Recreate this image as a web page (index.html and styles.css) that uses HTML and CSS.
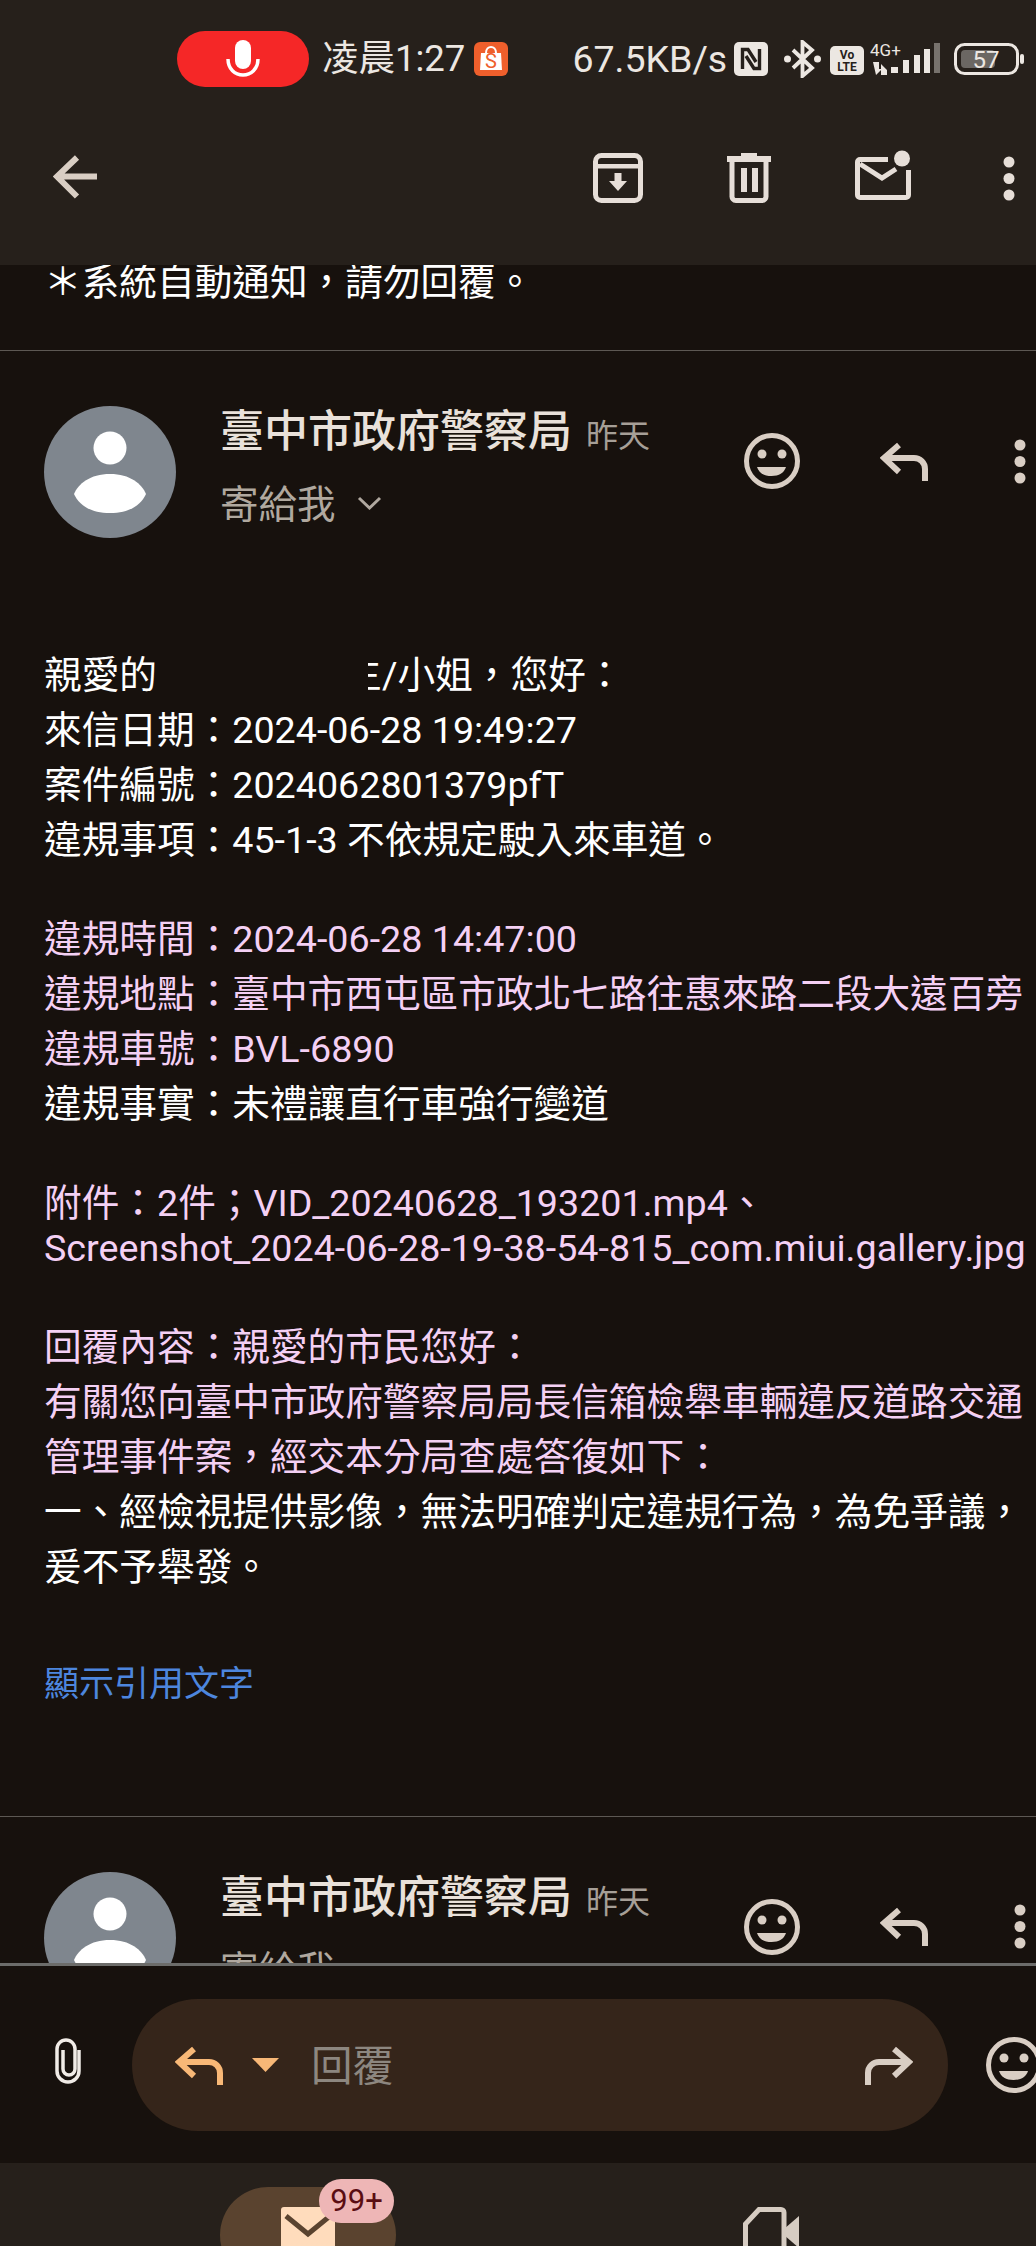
FILE: index.html
```html
<!DOCTYPE html>
<html lang="zh-Hant">
<head>
<meta charset="utf-8">
<title>Gmail</title>
<link rel="stylesheet" href="styles.css">
</head>
<body>
<svg class="defs" aria-hidden="true">
  <symbol id="reply" viewBox="0 0 49 39"><path d="M19 3 L4 16 L19 30 M4 16 H34 A11 11 0 0 1 45 27 V39" fill="none" stroke="currentColor" stroke-width="6"/></symbol>
  <symbol id="smile" viewBox="0 0 56 56"><circle cx="28" cy="28" r="25.500" fill="none" stroke="currentColor" stroke-width="5"/><circle cx="18" cy="21" r="4.500" fill="currentColor"/><circle cx="38" cy="21" r="4.500" fill="currentColor"/><path d="M13 34 H42 C40 40 35 43 27.500 43 C20 43 15 40 13 34Z" fill="currentColor"/></symbol>
  <symbol id="kebab" viewBox="0 0 22 45"><circle cx="11" cy="6" r="5.500" fill="currentColor"/><circle cx="11" cy="22.500" r="5.500" fill="currentColor"/><circle cx="11" cy="39" r="5.500" fill="currentColor"/></symbol>
  <symbol id="avatar" viewBox="0 0 132 132"><circle cx="66" cy="66" r="66" fill="#7f868e"/><circle cx="66" cy="42" r="16.500" fill="#fff"/><path d="M66 68 C86 68 98 78 102 88 C97 99 86 107 66 107 C46 107 35 99 30 88 C34 78 46 68 66 68Z" fill="#fff"/></symbol>
</svg>

<header class="topbar">
  <div class="status">
    <div class="rec">
      <svg class="rec-mic" viewBox="0 0 34 38"><rect x="9" y="0" width="16" height="29" rx="8" fill="#fff"/><path d="M2 19 C2 29 9 35 17 35 C25 35 32 29 32 19" fill="none" stroke="#fff" stroke-width="3.500"/></svg>
    </div>
    <span class="clock">凌晨1:27</span>
    <svg class="shopee" viewBox="0 0 34 34"><rect width="34" height="34" rx="6" fill="#ef5f2c"/><path d="M7 11 H27 L28 28 H6Z" fill="#fff"/><path d="M12 11 C12 3 22 3 22 11" fill="none" stroke="#fff" stroke-width="2"/><text x="17" y="26" class="shopee-s">S</text></svg>
    <span class="speed">67.5KB/s</span>
    <svg class="nfc" viewBox="0 0 34 34"><rect width="34" height="34" rx="5" fill="#ece7e2"/><path d="M8.500 27 V7.500 H14 L22 20 M25.500 7 V26.500 H20 L12 14" fill="none" stroke="#26201b" stroke-width="3.400"/></svg>
    <svg class="bt" viewBox="0 0 37 38"><path d="M9 10 L28 28 L18.500 36 V2 L28 10 L9 28" fill="none" stroke="#ece7e2" stroke-width="3.800"/><circle cx="3.500" cy="19" r="3.500" fill="#ece7e2"/><circle cx="33.500" cy="19" r="3.500" fill="#ece7e2"/></svg>
    <svg class="volte" viewBox="0 0 34 29"><rect width="34" height="29" rx="5" fill="#ece7e2"/><text x="17" y="13" class="volte-t">Vo</text><text x="17" y="25" class="volte-t">LTE</text></svg>
    <svg class="signal" viewBox="0 0 70 34"><text x="0" y="14" class="signal-t">4G+</text><path d="M3 20 H9 V27 H12 L6 33Z M11 33 V22 L17 28 V33Z" fill="#ece7e2"/><g fill="#ece7e2"><rect x="21" y="25" width="7" height="6"/><rect x="33" y="18" width="6" height="13"/><rect x="44" y="13" width="6" height="18"/><rect x="54" y="7" width="6" height="24"/></g><rect x="64" y="1" width="6" height="30" fill="#77726d"/></svg>
    <svg class="battery" viewBox="0 0 70 32"><rect x="1.500" y="1.500" width="62" height="29" rx="9" fill="none" stroke="#ece7e2" stroke-width="3"/><rect x="7" y="7" width="34" height="18" rx="4" fill="#6b6763"/><rect x="66" y="11" width="4" height="10" rx="2" fill="#ece7e2"/><text x="32" y="25" class="battery-t">57</text></svg>
  </div>
  <div class="toolbar">
    <svg class="back" viewBox="0 0 44 45"><path d="M24 3.500 L4 22.500 L24 42.500 M4 22.500 H44" fill="none" stroke="#d9cec4" stroke-width="6"/></svg>
    <div class="tools">
      <svg class="t-archive" viewBox="0 0 50 50"><rect x="2.500" y="2.500" width="45" height="45" rx="6" fill="none" stroke="#e6ded8" stroke-width="5"/><rect x="3" y="11" width="44" height="4.500" fill="#e6ded8"/><path d="M21.500 20 H28.500 V28 H34 L25 38 L16 28 H21.500Z" fill="#e6ded8"/></svg>
      <svg class="t-trash" viewBox="0 0 44 50"><path d="M14 0 H30 V3 H44 V9 H0 V3 H14Z" fill="#e6ded8"/><path d="M5 8 V43 A4 4 0 0 0 9 47.500 H35 A4 4 0 0 0 39 43 V8" fill="none" stroke="#e6ded8" stroke-width="5"/><rect x="14" y="15" width="6" height="24" fill="#e6ded8"/><rect x="25" y="15" width="6" height="24" fill="#e6ded8"/></svg>
      <svg class="t-mail" viewBox="0 0 56 50"><path d="M33 9.500 H5 A2.500 2.500 0 0 0 2.500 12 V45 A2.500 2.500 0 0 0 5 47.500 H51 A2.500 2.500 0 0 0 53.500 45 V20" fill="none" stroke="#e6ded8" stroke-width="5"/><path d="M5 14 L27 28 L41 19" fill="none" stroke="#e6ded8" stroke-width="5"/><circle cx="47" cy="8.500" r="8" fill="#e6ded8"/></svg>
      <svg class="t-kebab"><use href="#kebab"/></svg>
    </div>
  </div>
</header>

<main class="scroll">
  <p class="ln first">＊系統自動通知，請勿回覆。</p>
  <hr class="rule first-rule">

  <section class="msg">
    <div class="head">
      <svg class="avatar"><use href="#avatar"/></svg>
      <div class="who">
        <div class="who-top"><span class="name">臺中市政府警察局</span><span class="when">昨天</span></div>
        <div class="who-bot"><span class="to">寄給我</span><svg class="chev" viewBox="0 0 25 14"><path d="M2 2 L12.500 12 L23 2" fill="none" stroke="#b0a89f" stroke-width="3"/></svg></div>
      </div>
      <div class="acts">
        <svg class="a-smile"><use href="#smile"/></svg>
        <svg class="a-reply"><use href="#reply"/></svg>
        <svg class="a-kebab"><use href="#kebab"/></svg>
      </div>
    </div>

    <div class="body">
      <div class="group">
        <p class="ln">親愛的<span class="mask"></span><span class="frag"><span class="frag-in">生</span></span>/小姐，您好：</p>
        <p class="ln">來信日期：2024-06-28 19:49:27</p>
        <p class="ln">案件編號：2024062801379pfT</p>
        <p class="ln">違規事項：45-1-3 不依規定駛入來車道。</p>
      </div>
      <div class="group">
        <p class="ln pink">違規時間：2024-06-28 14:47:00</p>
        <p class="ln pink">違規地點：臺中市西屯區市政北七路往惠來路二段大遠百旁</p>
        <p class="ln pink">違規車號：BVL-6890</p>
        <p class="ln">違規事實：未禮讓直行車強行變道</p>
      </div>
      <div class="group">
        <p class="ln pink">附件：2件；VID_20240628_193201.mp4、</p>
        <p class="ln pink latin">Screenshot_2024-06-28-19-38-54-815_com.miui.gallery.jpg</p>
      </div>
      <div class="group">
        <p class="ln pink">回覆內容：親愛的市民您好：</p>
        <p class="ln pink">有關您向臺中市政府警察局局長信箱檢舉車輛違反道路交通</p>
        <p class="ln pink">管理事件案，經交本分局查處答復如下：</p>
        <p class="ln">一、經檢視提供影像，無法明確判定違規行為，為免爭議，</p>
        <p class="ln">爰不予舉發。</p>
      </div>
      <p class="ln quote">顯示引用文字</p>
    </div>
  </section>

  <hr class="rule">

  <section class="msg">
    <div class="head">
      <svg class="avatar"><use href="#avatar"/></svg>
      <div class="who">
        <div class="who-top"><span class="name">臺中市政府警察局</span><span class="when">昨天</span></div>
        <div class="who-bot"><span class="to">寄給我</span></div>
      </div>
      <div class="acts">
        <svg class="a-smile"><use href="#smile"/></svg>
        <svg class="a-reply"><use href="#reply"/></svg>
        <svg class="a-kebab"><use href="#kebab"/></svg>
      </div>
    </div>
  </section>
</main>

<footer class="composer">
  <svg class="clip" viewBox="0 0 26 46"><path d="M24 12 V33 A11 11 0 0 1 2 33 V11 A9 9 0 0 1 20 11 V31 A6 6 0 0 1 8 31 V12" fill="none" stroke="#f0ebe6" stroke-width="3.500"/></svg>
  <div class="pill">
    <svg class="p-reply"><use href="#reply"/></svg>
    <svg class="p-caret" viewBox="0 0 27 14"><path d="M0 0 H27 L13.500 14Z" fill="#f8b877"/></svg>
    <span class="p-text">回覆</span>
    <svg class="p-forward"><use href="#reply"/></svg>
  </div>
  <svg class="c-smile"><use href="#smile"/></svg>
</footer>

<nav class="nav">
  <div class="nav-active">
    <svg class="nav-mail" viewBox="0 0 54 60"><rect width="54" height="60" rx="3" fill="#ffdcbc"/><path d="M5 9 L27 27 L49 9" fill="none" stroke="#5a432f" stroke-width="5"/></svg>
    <span class="badge">99+</span>
  </div>
  <svg class="nav-video" viewBox="0 0 56 60"><path d="M16 2.500 H38 A3 3 0 0 1 41 5.500 V57 H2.500 V17Z" fill="none" stroke="#d6ccc2" stroke-width="5"/><path d="M41 22 L56 9 V41 L41 28Z" fill="#d6ccc2"/></svg>
</nav>
</body>
</html>
```
FILE: styles.css
```css
* { box-sizing: border-box; }
html, body { margin: 0; padding: 0; }
body {
  width: 1036px;
  height: 2246px;
  overflow: hidden;
  display: flex;
  flex-direction: column;
  background: #17110d;
  color: #fff;
  font-family: Roboto, "Noto Sans CJK TC", sans-serif;
}
svg { display: block; flex: none; }
.defs { width: 0; height: 0; }

/* top */
.topbar { flex: none; height: 265px; background: #26201b; padding-top: 31px; position: relative; z-index: 1; }
.status { display: flex; align-items: center; height: 56px; padding-left: 177px; color: #ece7e2; }
.rec { width: 132px; height: 56px; border-radius: 28px; background: #f52727; display: flex; align-items: center; justify-content: center; }
.rec-mic { width: 34px; height: 38px; }
.clock { margin-left: 13px; font-size: 36.5px; white-space: nowrap; line-height: 56px; }
.shopee { width: 34px; height: 34px; margin-left: 9px; }
.shopee-s { font-size: 20px; fill: #ef5f2c; text-anchor: middle; font-family: Roboto, sans-serif; }
.speed { margin-left: 64px; font-size: 37.5px; line-height: 56px; white-space: nowrap; }
.nfc { width: 34px; height: 34px; margin-left: 7px; }
.bt { width: 37px; height: 38px; margin-left: 16px; }
.volte { width: 34px; height: 29px; margin-left: 9px; margin-top: 2px; }
.volte-t { font-size: 12px; font-weight: 700; fill: #26201b; text-anchor: middle; font-family: Roboto, sans-serif; }
.signal { width: 70px; height: 34px; margin-left: 6px; }
.signal-t { font-size: 17px; fill: #ece7e2; font-family: Roboto, sans-serif; }
.battery { width: 70px; height: 32px; margin-left: 14px; }
.battery-t { font-size: 24px; fill: #ece7e2; text-anchor: middle; font-family: Roboto, sans-serif; }

.toolbar { height: 178px; display: flex; align-items: center; padding-left: 53px; padding-right: 13px; }
.back { width: 44px; height: 45px; }
.tools { margin-left: auto; margin-top: 4px; display: flex; align-items: center; gap: 84px; color: #e6ded8; }
.t-archive { width: 50px; height: 50px; }
.t-trash { width: 44px; height: 50px; }
.t-mail { width: 56px; height: 50px; margin-bottom: 6px; }
.t-kebab { width: 28px; height: 45px; padding: 0 3px; }

/* scroll */
.scroll { flex: 1; min-height: 0; overflow: hidden; }
.ln { margin: 0; font-size: 37.67px; line-height: 55px; white-space: nowrap; color: #fff; }
.first { margin: -10px 0 0 44px; }
.rule { margin: 0; border: 0; height: 1px; background: #5d5853; }
.first-rule { margin-top: 40px; }
.msg { padding-top: 55px; }
.head { display: flex; align-items: flex-start; padding: 0 5px 0 44px; }
.avatar { width: 132px; height: 132px; }
.who { margin-left: 44px; }
.who-top { display: flex; align-items: baseline; height: 52px; }
.name { font-size: 44px; font-weight: 500; line-height: 52px; color: #e9e1da; white-space: nowrap; }
.when { font-size: 32px; margin-left: 14px; color: #a69f97; }
.who-bot { display: flex; align-items: center; height: 54px; margin-top: 16px; }
.to { font-size: 38.5px; color: #b0a89f; }
.chev { width: 25px; height: 14px; margin-left: 21px; margin-top: 4px; }
.acts { margin-left: auto; margin-top: 27px; display: flex; align-items: center; gap: 80px; color: #d9cec4; }
.a-smile { width: 56px; height: 56px; }
.a-reply { width: 49px; height: 39px; }
.a-kebab { width: 22px; height: 45px; }

.body { padding: 109.500px 0 0 44px; }
.group + .group { margin-top: 44px; }
.pink { color: #f4d0f4; }
.latin { line-height: 35px; padding-bottom: 10px; }
.mask { display: inline-block; width: 211px; }
.frag { display: inline-block; width: 14px; height: 45px; overflow: hidden; vertical-align: -9px; }
.frag-in { display: block; margin-left: -24px; line-height: 45px; width: 40px; }
.quote { color: #4d86de; font-size: 35px; margin-top: 62px; padding-bottom: 104px; }

/* composer */
.composer { flex: none; height: 200px; background: #17110d; border-top: 3px solid #6c6c6a; display: flex; align-items: flex-start; overflow: hidden; position: relative; z-index: 1; padding-top: 33px; padding-left: 55px; }
.clip { width: 26px; height: 46px; margin-top: 39px; }
.pill { margin-left: 51px; width: 816px; height: 132px; flex: none; border-radius: 66px; background: #35251a; display: flex; align-items: center; padding-left: 43px; padding-right: 35px; }
.p-reply { width: 49px; height: 39px; color: #f8b877; }
.p-caret { width: 27px; height: 14px; margin-left: 28px; }
.p-text { margin-left: 32px; margin-top: -5px; font-size: 41.5px; color: #8d8780; }
.p-forward { width: 49px; height: 39px; margin-left: auto; color: #d9cec4; transform: scaleX(-1); }
.c-smile { width: 56px; height: 56px; margin-left: 38px; margin-top: 38px; color: #d9cec4; }

/* nav */
.nav { flex: none; height: 83px; background: #26201b; overflow: hidden; display: flex; align-items: flex-start; padding: 24px 0 0 220px; }
.nav-active { position: relative; width: 176px; height: 96px; border-radius: 48px; background: #5a432f; padding: 20px 0 0 61px; }
.nav-mail { width: 54px; height: 60px; }
.badge { position: absolute; left: 99px; top: -8px; width: 75px; height: 44px; border-radius: 22px; background: #eeb6b6; color: #5a0d12; font-size: 31px; line-height: 44px; text-align: center; }
.nav-video { width: 56px; height: 60px; margin-left: 347px; margin-top: 20px; }
```
